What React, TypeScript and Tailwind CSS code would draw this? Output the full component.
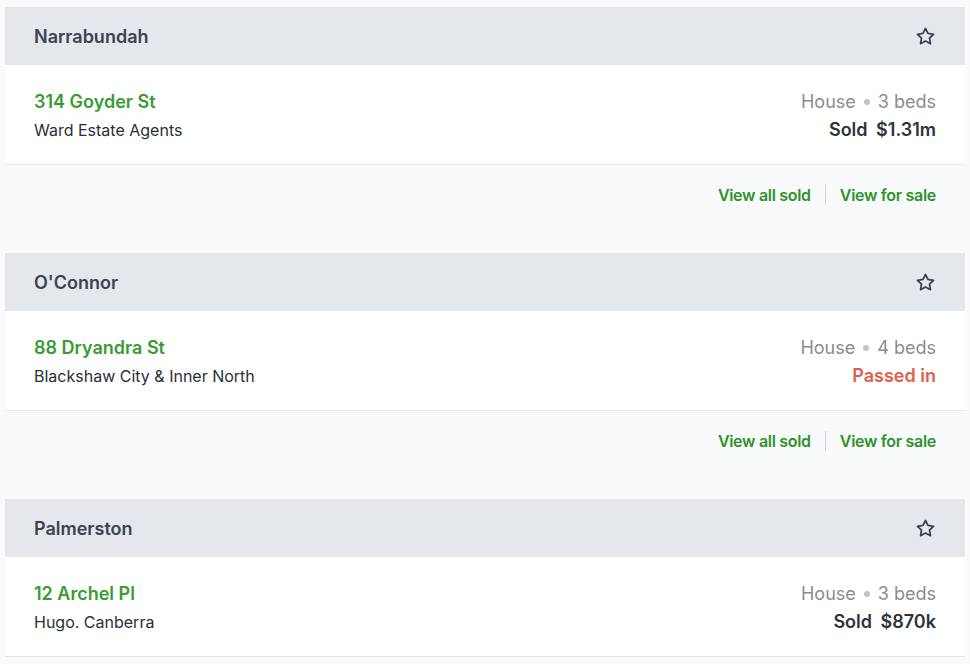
import React from "react";

type Item = {
  suburb: string;
  address: string;
  agent: string;
  type: string;
  beds: string;
  status: "sold" | "passed";
  price?: string;
};

const items: Item[] = [
  { suburb: "Narrabundah", address: "314 Goyder St", agent: "Ward Estate Agents", type: "House", beds: "3 beds", status: "sold", price: "$1.31m" },
  { suburb: "O'Connor", address: "88 Dryandra St", agent: "Blackshaw City & Inner North", type: "House", beds: "4 beds", status: "passed" },
  { suburb: "Palmerston", address: "12 Archel Pl", agent: "Hugo. Canberra", type: "House", beds: "3 beds", status: "sold", price: "$870k" },
];

function StarIcon() {
  return (
    <svg width="21" height="21" viewBox="0 0 24 24" fill="none" stroke="#3b4050" strokeWidth="2" strokeLinejoin="round" strokeLinecap="round">
      <path d="M12 2.8l2.83 5.74 6.33.92-4.58 4.46 1.08 6.3L12 17.24l-5.66 2.98 1.08-6.3L2.84 9.46l6.33-.92L12 2.8z" />
    </svg>
  );
}

export default function App() {
  return (
    <div
      className="min-h-[664px] bg-[#f8fafc] px-[5px] pt-[7px]"
      style={{ fontFamily: "Inter, 'Noto Sans', 'Liberation Sans', sans-serif" }}
    >
      {items.map((it, i) => (
        <div key={i} className="mb-[28px]">
          <div className="flex h-[58px] items-center justify-between bg-[#e4e7ec] pl-[29px] pr-[29px]">
            <span className="text-[18px] font-semibold text-[#3d4250]">{it.suburb}</span>
            <StarIcon />
          </div>
          <div className="flex h-[100px] justify-between border-b border-[#e3e6ea] bg-white px-[29px] pt-[23px]">
            <div className="flex flex-col">
              <span className="text-[18px] font-semibold leading-[28px] text-[#3a9b33]">{it.address}</span>
              <span className="text-[16px] leading-[28px] text-[#2b2f38]">{it.agent}</span>
            </div>
            <div className="flex flex-col items-end">
              <span className="text-[18px] leading-[28px] text-[#8a8c90]">
                {it.type}
                <span className="mx-[8px] inline-block h-[6px] w-[6px] translate-y-[-3px] rounded-full bg-[#c2c4c8]" />
                {it.beds}
              </span>
              {it.status === "sold" ? (
                <span className="text-[18px] font-semibold leading-[28px] text-[#2e323b]">
                  Sold <span className="ml-[4px]">{it.price}</span>
                </span>
              ) : (
                <span className="text-[18px] font-semibold leading-[28px] text-[#e0604a]">Passed in</span>
              )}
            </div>
          </div>
          {i < items.length - 1 && (
            <div className="flex h-[60px] items-center justify-end px-[29px]">
              <span className="text-[16px] font-semibold tracking-[-0.3px] text-[#2f922b]">View all sold</span>
              <span className="mx-[14px] h-[20px] w-px bg-[#cfd2d6]" />
              <span className="text-[16px] font-semibold tracking-[-0.3px] text-[#2f922b]">View for sale</span>
            </div>
          )}
        </div>
      ))}
    </div>
  );
}
